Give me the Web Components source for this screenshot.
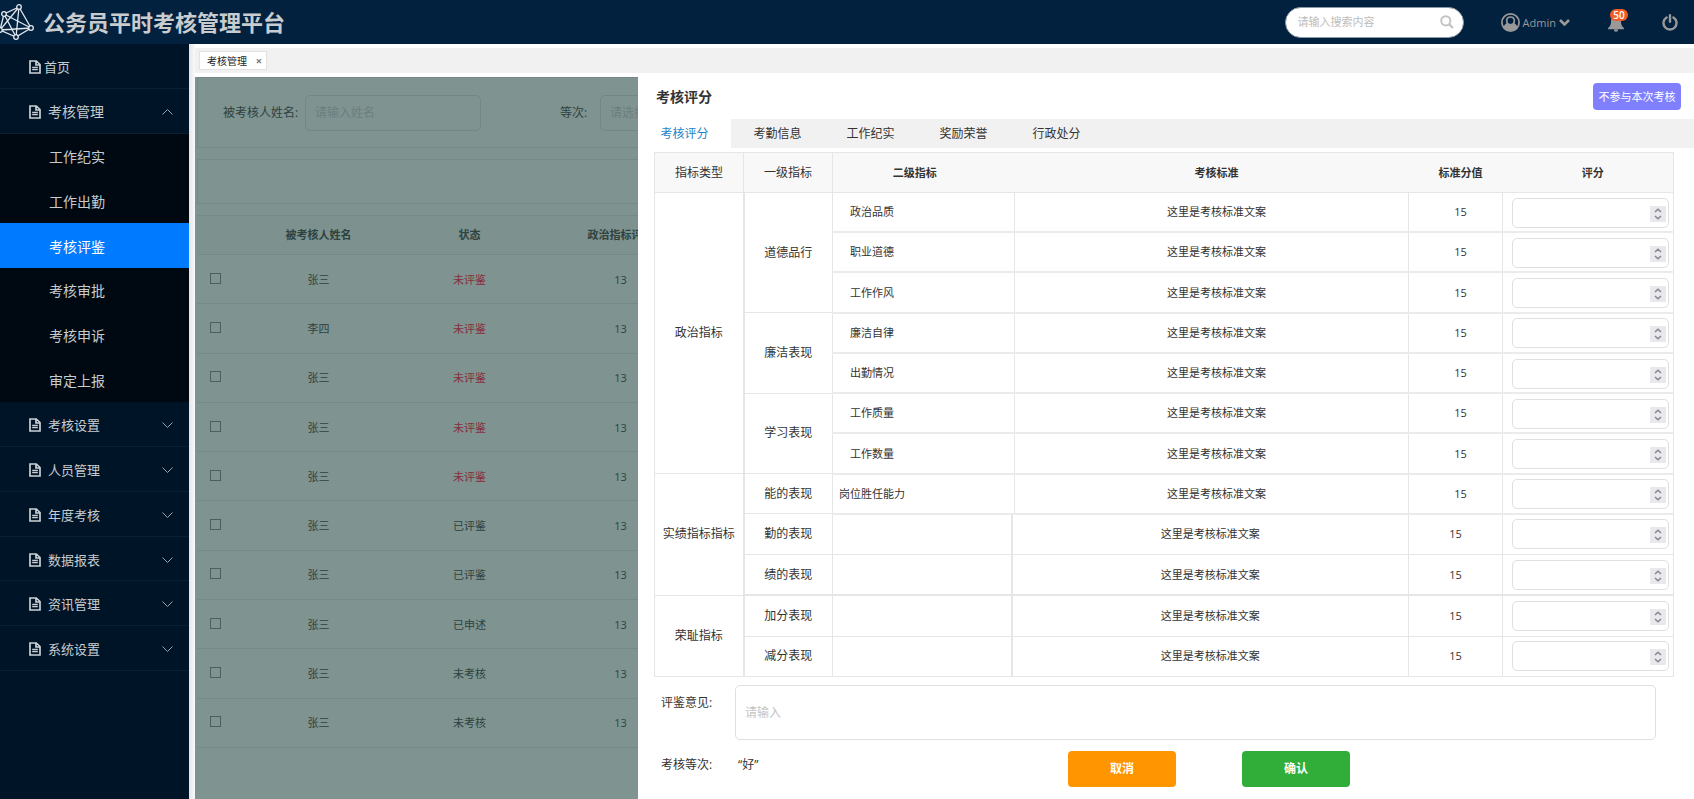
<!DOCTYPE html>
<html lang="zh-CN">
<head>
<meta charset="utf-8">
<title>公务员平时考核管理平台</title>
<style>
  html, body { height: 100%; margin: 0; }
  body { font-family: "Open Sans", "Noto Sans CJK SC", sans-serif; font-size: 12px; line-height: 20px; color: #333; background: #fff; overflow: hidden; }
</style>
</head>
<body>
<assess-app></assess-app>

<template id="t-app">
  <style>
    :host { display: grid; height: 100vh; grid-template: 44px minmax(0, 1fr) / 189px 6px minmax(0, 1fr); }
    app-header { grid-column: 1 / -1; }
    .gutter { background: linear-gradient(90deg, #e4e5e9, #fafafa); }
    main { display: flex; flex-direction: column; min-width: 0; padding-top: 4px; }
    .stage { flex: 1; position: relative; margin-top: 4px; overflow: hidden; }
    record-page { height: 100%; }
    /* The drawer lies over the record list. */
    score-drawer { position: absolute; inset: 0 0 0 443px; }
  </style>
  <app-header>公务员平时考核管理平台</app-header>
  <side-menu>
    <menu-item kind="home">首页</menu-item>
    <menu-item kind="open">考核管理</menu-item>
    <menu-item kind="sub">工作纪实</menu-item>
    <menu-item kind="sub">工作出勤</menu-item>
    <menu-item kind="sub" current>考核评鉴</menu-item>
    <menu-item kind="sub">考核审批</menu-item>
    <menu-item kind="sub">考核申诉</menu-item>
    <menu-item kind="sub">审定上报</menu-item>
    <menu-item kind="closed">考核设置</menu-item>
    <menu-item kind="closed">人员管理</menu-item>
    <menu-item kind="closed">年度考核</menu-item>
    <menu-item kind="closed">数据报表</menu-item>
    <menu-item kind="closed">资讯管理</menu-item>
    <menu-item kind="closed">系统设置</menu-item>
  </side-menu>
  <div class="gutter"></div>
  <main>
    <page-tabs>考核管理</page-tabs>
    <div class="stage">
      <record-page></record-page>
      <score-drawer></score-drawer>
    </div>
  </main>
</template>

<template id="t-header">
  <style>
    :host { display: flex; align-items: center; box-sizing: border-box; background: #01213f; color: #999; padding-right: 16px; }
    svg { display: block; flex: none; }
    h1 { flex: 1; margin: 0 0 0 7px; font-size: 22px; line-height: 44px; font-weight: 700; color: #c9cccf; white-space: nowrap; }
    .search { display: flex; align-items: center; box-sizing: border-box; width: 179px; height: 31px; padding: 0 9px 0 12px; border: 1px solid #8a97a5; border-radius: 16px; background: #fff; }
    .search input { flex: 1; min-width: 0; border: 0; padding: 0; outline: 0; background: none; font: 11px/20px "Open Sans", "Noto Sans CJK SC", sans-serif; }
    .search input::placeholder { color: #bdbdbd; }
    button { display: flex; align-items: center; gap: 3px; border: 0; padding: 0; background: none; color: inherit; font: 11px/20px "Open Sans", sans-serif; }
    .user { margin-left: 37px; }
    .user span { padding-top: 2px; }
    .bell { position: relative; margin-left: 38px; padding-top: 3px; }
    .bell b { position: absolute; left: 2px; top: -3px; width: 18px; height: 12px; border-radius: 6px; background: #f05a23; color: #fff; font-size: 10px; line-height: 12px; font-weight: 600; text-align: center; }
    .power { margin-left: 38px; }
  </style>
  <svg width="36" height="40" viewBox="0 0 36 40" fill="none" stroke="#e4e8ec" stroke-width="1.3"><path d="M19 5 4 12 0 28 16 35 31 26ZM19 5 0 28M19 5 16 35M4 12 31 26M4 12 16 35M0 28 31 26"/><g fill="#01213f"><circle cx="19" cy="5" r="2.3"/><circle cx="4" cy="12" r="2.3"/><circle cx="31" cy="26" r="2.3"/><circle cx="16" cy="35" r="2.3"/><circle cx="0" cy="28" r="2.3"/></g></svg>
  <h1><slot></slot></h1>
  <div class="search">
    <input type="text" aria-label="搜索" placeholder="请输入搜索内容">
    <svg width="14" height="14" viewBox="0 0 14 14" fill="none" stroke="#c4c4c4" stroke-width="2"><circle cx="5.8" cy="5.8" r="4.6"/><path d="M9.3 9.3 13 13" stroke-width="2.4"/></svg>
  </div>
  <button class="user" type="button">
    <svg width="19" height="19" viewBox="0 0 19 19"><circle cx="9.5" cy="9.5" r="8.6" fill="none" stroke="#999" stroke-width="1.7"/><path d="M9.5 4c2.300 0 3.800 1.500 3.800 3.700s-1.500 4-3.800 4-3.800-1.800-3.800-4S7.200 4 9.500 4Z" fill="none" stroke="#999" stroke-width="1.7"/><path d="M2.600 14.600c.6-2.600 1.800-3.800 3.600-4 1.900 2.200 4.700 2.200 6.600 0 1.800.2 3 1.400 3.600 4-3.400 4.300-10.400 4.300-13.800 0Z" fill="#999"/></svg>
    <span>Admin</span>
    <svg width="11" height="8" viewBox="0 0 11 8" fill="none" stroke="#999" stroke-width="2.6"><path d="m1 2 4.500 4.500L10 2"/></svg>
  </button>
  <button class="bell" type="button" aria-label="通知">
    <svg width="16" height="17" viewBox="0 0 16 17" fill="#999"><path d="M8 0c3.400.5 4.800 3 4.900 6.200.1 3.200 1 5.100 3 6.800v1.200H.1V13c2-1.700 2.900-3.600 3-6.800C3.200 3 4.600.5 8 0ZM5.800 14.500h4.400a2.200 2.200 0 0 1-4.400 0Z"/></svg>
    <b>50</b>
  </button>
  <button class="power" type="button" aria-label="退出">
    <svg width="16" height="17" viewBox="0 0 16 17" fill="none" stroke="#999" stroke-width="2.4" stroke-linecap="round"><path d="M8 1.300v6.500M4.600 3.400a6.500 6.500 0 1 0 6.800 0"/></svg>
  </button>
</template>

<template id="t-menu">
  <style>
    :host { display: block; background: #001428; }
    nav { display: grid; grid-auto-rows: 1fr; height: 627px; }
  </style>
  <nav><slot></slot></nav>
</template>

<template id="t-item">
  <style>
    :host { display: block; box-sizing: border-box; border-bottom: 1px solid #0a1f33; }
    :host([kind="sub"]) { border: 0; background: #000911; }
    :host([current]) { background: #007bff; }
    a { display: flex; align-items: center; height: 100%; box-sizing: border-box; padding: 2px 16px 0 29px; color: #c8cccf; font-size: 13px; text-decoration: none; }
    span { flex: 1; padding-left: 7px; }
    svg { display: block; fill: none; }
    .arrow { display: none; stroke: #9aa3ab; }
    :host([kind="home"]) span { padding-left: 3px; }
    :host([kind="open"]) a, :host([kind="sub"]) a { font-size: 14px; }
    :host([kind="sub"]) a { padding-left: 42px; }
    :host([kind="sub"]) .doc { display: none; }
    :host([current]) a { color: #fff; }
    :host([kind="open"]) .up, :host([kind="closed"]) .down { display: block; }
  </style>
  <a href="#">
    <svg class="doc" width="12" height="14" viewBox="0 0 12 14" stroke="#ccd0d3" stroke-width="1.700"><path d="M1 1h6.300L11 4.500V13H1ZM7 1v4h4"/><path d="M3.200 7.500h5.600M3.200 9.700h5.600" stroke-width="1.300"/></svg>
    <span><slot></slot></span>
    <svg class="arrow up" width="11" height="6" viewBox="0 0 11 6"><path d="M.5 5.500 5.500.5l5 5"/></svg>
    <svg class="arrow down" width="11" height="6" viewBox="0 0 11 6"><path d="m.5.500 5 5 5-5"/></svg>
  </a>
</template>

<template id="t-tabs">
  <style>
    :host { display: flex; align-items: center; box-sizing: border-box; height: 25px; padding-left: 4px; background: #f1f1f1; }
    div { display: flex; align-items: center; justify-content: space-between; box-sizing: border-box; width: 68px; height: 19px; padding: 0 3px 0 7px; border: 1px solid #e2e2e2; background: #fff; font-size: 10px; line-height: 16px; color: #222; }
    button { border: 0; padding: 0; width: 8px; background: none; color: #777; font: 700 11px/14px "Open Sans", sans-serif; }
  </style>
  <div><slot></slot><button type="button" aria-label="关闭">×</button></div>
</template>

<template id="t-record">
  <style>
    :host { display: block; box-sizing: border-box; padding-left: 2px; background: #7f9391; color: #2e4240; }
    form, .bar { box-sizing: border-box; border: 1px solid #758987; }
    form { display: flex; align-items: center; height: 71px; padding-left: 25px; }
    .name { width: 82px; }
    input[type="text"], select { box-sizing: border-box; width: 176px; height: 36px; padding: 0 9px; border: 1px solid #738785; border-radius: 5px; background: none; color: #6b7f7d; font: 12px/20px "Open Sans", "Noto Sans CJK SC", sans-serif; appearance: none; }
    input::placeholder { color: #6b7f7d; }
    .grade { width: 40px; margin-left: 79px; }
    .bar { height: 45px; margin: 11px 0 11px; }
    table { width: 100%; height: 533px; border-collapse: collapse; table-layout: fixed; font-size: 11px; text-align: center; }
    tr { border-top: 1px solid #758987; }
    tr:last-child { border-bottom: 1px solid #758987; }
    th, td { padding: 0; }
    td { padding-top: 1px; }
    thead tr { height: 39px; background: #7d918f; }
    .late { color: #862f3b; }
    td:first-child { text-align: left; padding-left: 13px; }
    input[type="checkbox"] { appearance: none; display: block; width: 11px; height: 11px; margin: 0 0 3px; border: 1px solid #4b5f5d; }
    .c1 { width: 46px; }
    .c2 { width: 151px; }
  </style>
  <form>
    <label class="name" for="who">被考核人姓名:</label>
    <input id="who" type="text" placeholder="请输入姓名">
    <label class="grade" for="grade">等次:</label>
    <select id="grade"><option>请选择</option></select>
  </form>
  <div class="bar"></div>
  <table>
    <colgroup><col class="c1"><col class="c2"><col class="c2"><col class="c2"><col></colgroup>
    <thead><tr><th></th><th>被考核人姓名</th><th>状态</th><th>政治指标评分</th><th></th></tr></thead>
    <tbody></tbody>
  </table>
</template>

<template id="t-drawer">
  <style>
    :host { display: block; background: #fff; color: #333; overflow: hidden; }
    * { box-sizing: border-box; }
    header { display: flex; align-items: center; justify-content: space-between; height: 42px; padding: 0 13px 3px 18px; }
    h2 { margin: 0; font-size: 14px; line-height: 20px; font-weight: 700; }
    button { border: 0; padding: 0; font: 12px/20px "Open Sans", "Noto Sans CJK SC", sans-serif; }
    .skip { width: 88px; height: 27px; border-radius: 4px; background: #8080ff; color: #fff; font-size: 11px; }
    nav { display: flex; background: #f1f1f1; }
    nav a { width: 93px; height: 29px; line-height: 29px; text-align: center; color: #333; text-decoration: none; }
    nav a:first-child { background: #fff; color: #1c84c6; }
    .body { padding: 4px 20px 0 16px; }
    table { width: 100%; height: 525px; border-collapse: collapse; table-layout: fixed; text-align: center; }
    th, td { padding: 0; border: 1px solid #e6e6e6; font-weight: 400; }
    thead tr { height: 40px; background: #f8f8f8; }
    thead th:nth-child(n+3) { border-left: 0; border-right: 0; font-size: 11px; font-weight: 700; padding-left: 10px; }
    thead th:nth-child(3) { border-left: 1px solid #e6e6e6; padding: 0 18px 0 0; }
    thead th:last-child { border-right: 1px solid #e6e6e6; }
    td.type { border-right: 2px solid #e6e6e6; }
    td.second, td.std, td.pts { font-size: 11px; }
    td.second { text-align: left; padding-left: 17px; }
    td.tight { padding-left: 6px; }
    .main .std, .main .pts { padding-left: 10px; }
    .main .second, .main .std, .main .pts, .main .mark { border-bottom: 2px solid #ebebeb; }
    .rest .second { border-right: 2px solid #e6e6e6; }
    .last td { border-bottom: 2px solid #e6e6e6; }
    td.mark { padding: 4px 4px 4px 9px; }
    .main td.mark { padding-bottom: 3px; }
    .num { position: relative; }
    .num input { display: block; width: 100%; height: 30px; padding: 0 24px 0 8px; border: 1px solid #dfdfdf; border-radius: 5px; background: #fff; font: 12px/20px "Open Sans", sans-serif; appearance: textfield; }
    .num input::-webkit-inner-spin-button { appearance: none; }
    .num svg { position: absolute; right: 3px; top: 8px; background: #e9e9ed; }
    .c1 { width: 89px; } .c3 { width: 179px; } .c4 { width: 3px; } .c6 { width: 94px; } .c7 { width: 171px; }
    .note, .foot { display: flex; padding-left: 23px; }
    .note { padding-top: 8px; padding-right: 38px; }
    label, .key { flex: none; width: 74px; }
    .note label { padding-top: 8px; }
    textarea { flex: 1; display: block; height: 55px; padding: 17px 9px; border: 1px solid #dfdfdf; border-radius: 5px; resize: none; overflow: hidden; font: 12px/20px "Open Sans", "Noto Sans CJK SC", sans-serif; }
    textarea::placeholder { color: #c4c4c4; }
    .foot { padding-top: 11px; }
    .key, .val { padding-top: 4px; }
    .val { width: 333px; padding-left: 3px; }
    .foot button { width: 108px; height: 36px; border-radius: 4px; color: #fff; font-weight: 700; background: #ff9500; }
    .foot button + button { margin-left: 66px; background: #31ae39; }
  </style>
  <header><h2>考核评分</h2><button class="skip" type="button">不参与本次考核</button></header>
  <nav><a href="#">考核评分</a><a href="#">考勤信息</a><a href="#">工作纪实</a><a href="#">奖励荣誉</a><a href="#">行政处分</a></nav>
  <div class="body">
    <table>
      <colgroup><col class="c1"><col class="c1"><col class="c3"><col class="c4"><col><col class="c6"><col class="c7"></colgroup>
      <thead><tr><th>指标类型</th><th>一级指标</th><th colspan="2">二级指标</th><th>考核标准</th><th>标准分值</th><th>评分</th></tr></thead>
      <tbody></tbody>
    </table>
  </div>
  <div class="note"><label for="note">评鉴意见:</label><textarea id="note" placeholder="请输入"></textarea></div>
  <div class="foot"><span class="key">考核等次:</span><span class="val">“好”</span><button type="button">取消</button><button type="button">确认</button></div>
</template>

<script>
  const define = (name, templateId, setup) => customElements.define(name, class extends HTMLElement {
    constructor() {
      super();
      const root = this.attachShadow({ mode: 'open' });
      root.append(document.getElementById(templateId).content.cloneNode(true));
      if (setup) setup(root);
    }
  });

  const people = [['张三', '未评鉴'], ['李四', '未评鉴'], ['张三', '未评鉴'], ['张三', '未评鉴'], ['张三', '未评鉴'],
    ['张三', '已评鉴'], ['张三', '已评鉴'], ['张三', '已申述'], ['张三', '未考核'], ['张三', '未考核']];

  // [type, rows of type, first-level item, rows of item, second-level item]
  const scores = [
    ['政治指标', 7, '道德品行', 3, '政治品质'], ['', 0, '', 0, '职业道德'], ['', 0, '', 0, '工作作风'],
    ['', 0, '廉洁表现', 2, '廉洁自律'], ['', 0, '', 0, '出勤情况'],
    ['', 0, '学习表现', 2, '工作质量'], ['', 0, '', 0, '工作数量'],
    ['实绩指标指标', 3, '能的表现', 1, '岗位胜任能力'], ['', 0, '勤的表现', 1, ''], ['', 0, '绩的表现', 1, ''],
    ['荣耻指标', 2, '加分表现', 1, ''], ['', 0, '减分表现', 1, '']];

  define('app-header', 't-header');
  define('side-menu', 't-menu');
  define('menu-item', 't-item');
  define('page-tabs', 't-tabs');
  define('record-page', 't-record', root => {
    root.querySelector('tbody').innerHTML = people.map(([name, state]) =>
      `<tr><td><input type="checkbox" aria-label="选择${name}"></td><td>${name}</td><td class="${state === '未评鉴' ? 'late' : ''}">${state}</td><td>13</td><td></td></tr>`).join('');
  });
  define('score-drawer', 't-drawer', root => {
    root.querySelector('tbody').innerHTML = scores.map(([type, typeRows, first, firstRows, second], i) => {
      const main = i < 8;
      return `<tr class="${main ? 'main' : 'rest'}${i === 9 ? ' last' : ''}">`
        + (typeRows ? `<td class="type" rowspan="${typeRows}">${type}</td>` : '')
        + (firstRows ? `<td rowspan="${firstRows}">${first}</td>` : '')
        + `<td class="second${i === 7 ? ' tight' : ''}" colspan="${main ? 2 : 1}">${second}</td>`
        + `<td class="std" colspan="${main ? 1 : 2}">这里是考核标准文案</td><td class="pts">15</td>`
        + `<td class="mark"><div class="num"><input type="number" aria-label="${second || first}评分">`
        + `<svg width="16" height="16" viewBox="0 0 16 16" fill="none" stroke="#85858f" stroke-width="1.500"><path d="m5 6 3-2.800L11 6M5 10l3 2.800 3-2.800"/></svg></div></td></tr>`;
    }).join('');
  });
  define('assess-app', 't-app');
</script>
</body>
</html>
